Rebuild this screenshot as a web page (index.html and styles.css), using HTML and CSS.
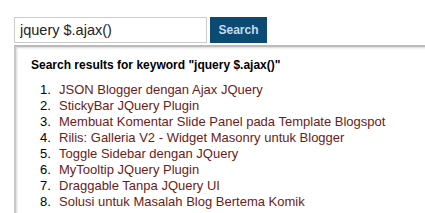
FILE: index.html
```html
<!DOCTYPE html>
<html lang="en">
  <head>
    <meta charset="UTF-8" />
    <title>Search</title>
    <link rel="stylesheet" href="styles.css">
  </head>
  <body>
    <div class="search-wrap">
      <!-- search form -->
      <form class="search-form">
        <input type="text" class="search-input" value="jquery $.ajax()" />
        <button type="button" class="search-btn">Search</button>
      </form>

      <!-- results panel -->
      <div class="results">
        <h4>Search results for keyword "jquery $.ajax()"</h4>
        <ol>
          <li><a href="#">JSON Blogger dengan Ajax JQuery</a></li>
          <li><a href="#">StickyBar JQuery Plugin</a></li>
          <li><a href="#">Membuat Komentar Slide Panel pada Template Blogspot</a></li>
          <li><a href="#">Rilis: Galleria V2 - Widget Masonry untuk Blogger</a></li>
          <li><a href="#">Toggle Sidebar dengan JQuery</a></li>
          <li><a href="#">MyTooltip JQuery Plugin</a></li>
          <li><a href="#">Draggable Tanpa JQuery UI</a></li>
          <li><a href="#">Solusi untuk Masalah Blog Bertema Komik</a></li>
        </ol>
      </div>
    </div>
  </body>
</html>
```

FILE: styles.css
```css
* {
  margin: 0;
  padding: 0;
  box-sizing: border-box;
}

body {
  font-family: "Liberation Sans", Arial, sans-serif;
  background: #fff;
  color: #000;
  overflow: hidden;
}

.search-wrap {
  padding: 17px 0 0 14px;
}

.search-form {
  display: flex;
  gap: 3px;
}

.search-input {
  width: 193px;
  height: 26px;
  border: 1px solid #ccc;
  padding: 0 5px;
  font-family: inherit;
  font-size: 14.5px;
  color: #222;
  outline: none;
}

.search-btn {
  width: 57px;
  height: 26px;
  border: none;
  background-color: #0b4a73;
  color: #c3dcf2;
  font-family: inherit;
  font-size: 12px;
  font-weight: bold;
  cursor: pointer;
}

/* dropdown with results */
.results {
  margin-top: 2px;
  width: 430px;
  height: 200px;
  border-top: 2px solid #bbb;
  border-left: 2px solid #c8c8c8;
  box-shadow: inset 1px 1px 2px rgba(0, 0, 0, 0.15);
  padding: 11px 0 0 15px;
}

.results h4 {
  font-size: 12px;
  font-weight: bold;
  margin-bottom: 10px;
}

.results ol {
  list-style: none;
  counter-reset: item;
  padding-left: 9px;
  font-size: 13px;
  line-height: 16px;
}

.results li {
  counter-increment: item;
  white-space: nowrap;
}

.results li::before {
  content: counter(item) ".";
  display: inline-block;
  width: 19px;
}

.results li a {
  color: #6b1b1b;
  text-decoration: none;
}
```
